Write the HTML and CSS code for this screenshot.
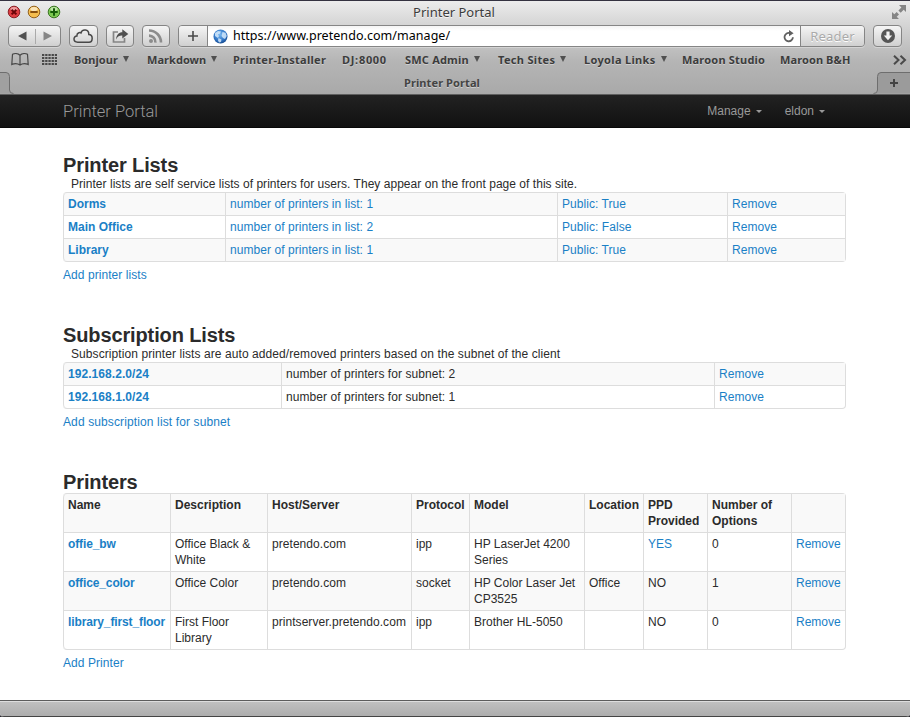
FILE: index.html
```html
<!DOCTYPE html>
<html lang="en">
<head>
<meta charset="utf-8">
<title>Printer Portal</title>
<link rel="stylesheet" href="styles.css">
</head>
<body>
<div class="window">
  <header class="chrome">
    <div class="titlebar">
      <div class="lights">
        <svg width="14" height="14" viewBox="0 0 14 14"><circle cx="7" cy="7" r="5.800" fill="#dc3c40" stroke="#8c2026"/><ellipse cx="7" cy="4" rx="3.600" ry="2" fill="#fff" opacity=".5"/><path d="M4.600 4.800l4.800 4.600M9.400 4.800L4.600 9.400" stroke="#6a0508" stroke-width="2"/></svg>
        <svg width="14" height="14" viewBox="0 0 14 14"><circle cx="7" cy="7" r="5.800" fill="#f4bd4e" stroke="#95621c"/><ellipse cx="7" cy="4" rx="3.600" ry="2" fill="#fff" opacity=".6"/><path d="M3.300 7h7.400" stroke="#7a4206" stroke-width="1.800"/></svg>
        <svg width="14" height="14" viewBox="0 0 14 14"><circle cx="7" cy="7" r="5.800" fill="#7cc950" stroke="#3c7624"/><ellipse cx="7" cy="4" rx="3.600" ry="2" fill="#fff" opacity=".5"/><path d="M3.300 7h7.400M7 3.300v7.400" stroke="#155c08" stroke-width="2"/></svg>
      </div>
      <div class="title"><span>Printer Portal</span></div>
      <svg class="expand" width="16" height="16" viewBox="0 0 16 16" fill="#858585"><path d="M8 1h7v7l-2.300-2.300-3 3-2.300-2.300 3-3z"/><path d="M1 8v7h7l-2.300-2.300 2.300-2.300-2.300-2.300-2.400 2.200z"/></svg>
    </div>
    <div class="toolbar">
      <div class="btn history">
        <svg width="52" height="20" viewBox="0 0 52 20"><path d="M17.500 5.500v9L9 10z" fill="#505050"/><path d="M34.500 5.500v9L43 10z" fill="#858585"/><path d="M26.500 3v15" stroke="#aaa"/></svg>
      </div>
      <div class="btn cloud">
        <svg width="20" height="16" viewBox="0 0 20 16"><path d="M4.700 14.200C-.3 14.200.1 8 3.900 7.900 3.800 4.900 6.700 4.100 7.900 5 9.100.700 16 .9 15.800 6.500 20.500 6.700 20 14.200 16 14.200z" fill="none" stroke="#484848" stroke-width="1.500"/></svg>
      </div>
      <div class="btn share">
        <svg width="18" height="16" viewBox="0 0 18 16"><path d="M7 4H2.500v10h11v-4" fill="none" stroke="#858585" stroke-width="1.700"/><path d="M5 11.500C5.500 6.500 8 4.300 11.300 4.300V1.300L17.300 6l-6 4.400V7.500C8.500 7.400 6.800 8.300 5 11.500z" fill="#505050"/></svg>
      </div>
      <div class="btn rss">
        <svg width="16" height="16" viewBox="0 0 16 16"><circle cx="3" cy="13" r="2" fill="#8c8c8c"/><path d="M1 7.600a6.400 6.400 0 0 1 6.400 7M1 2.500a12 12 0 0 1 12 12" fill="none" stroke="#8c8c8c" stroke-width="2.600"/></svg>
      </div>
      <div class="address">
        <div class="add"><svg width="12" height="12" viewBox="0 0 12 12"><path d="M1 6h10M6 1v10" stroke="#4a4a4a" stroke-width="1.600"/></svg></div>
        <div class="url">
          <svg width="15" height="15" viewBox="0 0 15 15"><defs><radialGradient id="globe" cx=".45" cy=".35" r=".65"><stop offset="0" stop-color="#79b9f2"/><stop offset=".7" stop-color="#2e73c4"/><stop offset="1" stop-color="#174b8f"/></radialGradient></defs><circle cx="7.500" cy="7.500" r="7" fill="url(#globe)"/><path d="M2 4l3-2 3 .5-1 2-2 1 1 1.500-1 2-3-2zM9.500 3l3 .8 1.300 3.200-1.800 3-2-1-1.500-2 .5-2zM5.500 9l3 1.500-.5 2.500-2 .5-1-2z" fill="#d3e9fb" opacity=".85"/></svg>
          <span class="href">https://www.pretendo.com/manage/</span>
          <svg class="reload" width="12" height="13" viewBox="0 0 12 13"><path d="M9.900 7.200A4.200 4.200 0 1 1 7 3.100" fill="none" stroke="#606060" stroke-width="1.800"/><path d="M6 0l4.600 3.300L6 6.300z" fill="#606060"/></svg>
        </div>
        <div class="reader"><span>Reader</span></div>
      </div>
      <div class="btn download">
        <svg width="16" height="16" viewBox="0 0 16 16"><circle cx="8" cy="8" r="7" fill="#555"/><path d="M6.400 3.600h3.200v4h2.600L8 12.200 3.800 7.600h2.600z" fill="#f2f2f2"/></svg>
      </div>
    </div>
    <nav class="bookmarks">
      <svg width="18" height="13" viewBox="0 0 18 13"><path d="M9 2.200C7 .4 3.500.3 1.500 1.300L.8 11.500C3.500 10.300 7 10.600 9 12c2-1.400 5.500-1.700 8.200-.5L16.500 1.300C14.500.3 11 .4 9 2.200zM9 2.200V12" fill="none" stroke="#484848" stroke-width="1.200"/></svg>
      <svg width="17" height="12" viewBox="0 0 17 12"><path d="M1 1h15M1 4h15M1 7h15M1 10h15" stroke="#484848" stroke-width="2" stroke-dasharray="2.300 .9"/></svg>
      <div class="bm bonjour"><span>Bonjour</span><i></i></div>
      <div class="bm markdown"><span>Markdown</span><i></i></div>
      <div class="bm installer"><span>Printer-Installer</span></div>
      <div class="bm dj"><span>DJ:8000</span></div>
      <div class="bm smc"><span>SMC Admin</span><i></i></div>
      <div class="bm tech"><span>Tech Sites</span><i></i></div>
      <div class="bm loyola"><span>Loyola Links</span><i></i></div>
      <div class="bm studio"><span>Maroon Studio</span></div>
      <div class="bm bh"><span>Maroon B&amp;H</span></div>
      <svg width="14" height="10" viewBox="0 0 14 10"><path d="M1 .8L5.500 5 1 9.200M7.500.8L12 5 7.500 9.200" fill="none" stroke="#4a4a4a" stroke-width="2"/></svg>
    </nav>
    <div class="tabs">
      <svg width="14" height="22" viewBox="0 0 14 22"><path d="M0 .5h6q3.500 0 3.500 4V18q0 3.500 4 3.500H0z" fill="#a0a0a0"/><path d="M0 .5h6q3.500 0 3.500 4V18q0 3.500 4 3.500" fill="none" stroke="#6e6e6e"/></svg>
      <div class="tab"><span>Printer Portal</span></div>
      <div class="tab-new">
        <svg width="37" height="22" viewBox="0 0 37 22"><path d="M37 .5H8q-3.500 0-3.500 4V18q0 3.500-4 3.500H37z" fill="#9b9b9b"/><path d="M37 .5H8q-3.500 0-3.500 4V18q0 3.500-4 3.500" fill="none" stroke="#6e6e6e"/><path d="M17 11h8M21 7v8" stroke="#444" stroke-width="2"/></svg>
      </div>
    </div>
  </header>

  <div class="navbar">
    <a class="brand">Printer Portal</a>
    <div class="menu"><a class="manage"><span>Manage</span><i></i></a><a><span>eldon</span><i></i></a></div>
  </div>

  <main>
    <section>
      <h3>Printer Lists</h3>
      <p>Printer lists are self service lists of printers for users. They appear on the front page of this site.</p>
      <table class="lists">
        <colgroup><col class="w162"><col class="w332"><col class="w170"><col></colgroup>
        <tr><th><a>Dorms</a></th><td><a>number of printers in list: 1</a></td><td><a>Public: True</a></td><td><a>Remove</a></td></tr>
        <tr><th><a>Main Office</a></th><td><a>number of printers in list: 2</a></td><td><a>Public: False</a></td><td><a>Remove</a></td></tr>
        <tr><th><a>Library</a></th><td><a>number of printers in list: 1</a></td><td><a>Public: True</a></td><td><a>Remove</a></td></tr>
      </table>
      <div class="more"><a>Add printer lists</a></div>
    </section>
    <section>
      <h3>Subscription Lists</h3>
      <p class="p-subs">Subscription printer lists are auto added/removed printers based on the subnet of the client</p>
      <table class="subnets">
        <colgroup><col class="w218"><col class="w433"><col></colgroup>
        <tr><th><a>192.168.2.0/24</a></th><td>number of printers for subnet: 2</td><td><a>Remove</a></td></tr>
        <tr><th><a>192.168.1.0/24</a></th><td>number of printers for subnet: 1</td><td><a>Remove</a></td></tr>
      </table>
      <div class="more more-subs"><a>Add subscription list for subnet</a></div>
    </section>
    <section>
      <h3>Printers</h3>
      <table class="printers">
        <colgroup><col class="w107"><col class="w97"><col class="w144"><col class="w58"><col class="w115"><col class="w59"><col class="w64"><col class="w84"><col></colgroup>
        <tr><th>Name</th><th>Description</th><th>Host/Server</th><th>Protocol</th><th>Model</th><th>Location</th><th>PPD<br>Provided</th><th>Number of<br>Options</th><th></th></tr>
        <tr><th><a>offie_bw</a></th><td>Office Black &amp;<br>White</td><td>pretendo.com</td><td>ipp</td><td>HP LaserJet 4200<br>Series</td><td></td><td><a>YES</a></td><td>0</td><td><a>Remove</a></td></tr>
        <tr><th><a>office_color</a></th><td>Office Color</td><td>pretendo.com</td><td>socket</td><td>HP Color Laser Jet<br>CP3525</td><td>Office</td><td>NO</td><td>1</td><td><a>Remove</a></td></tr>
        <tr><th><a>library_first_floor</a></th><td>First Floor<br>Library</td><td>printserver.pretendo.com</td><td>ipp</td><td>Brother HL-5050</td><td></td><td>NO</td><td>0</td><td><a>Remove</a></td></tr>
      </table>
      <div class="more"><a>Add Printer</a></div>
    </section>
  </main>
  <footer></footer>
</div>
</body>
</html>
```
FILE: styles.css
```css
* { box-sizing: border-box; }
html, body { margin: 0; height: 717px; overflow: hidden; background: #2a2830; }
body { font: 12px/16px "Liberation Sans", Arial, sans-serif; color: #2b2b2b; }
svg { display: block; flex: none; }
.window { height: 717px; display: flex; flex-direction: column; background: #fff; border-radius: 0 0 4px 4px; overflow: hidden; }

.chrome {
  height: 95px; flex: none;
  border-top: 1px solid #343240;
  border-bottom: 1px solid #5f5f5f;
  background: linear-gradient(#ececec 0, #dadada 18px, #c6c6c6 40px, #b5b5b5 60px, #a9a9a9 93px);
  font-family: "Noto Sans", "Open Sans", sans-serif;
}
.titlebar { height: 24px; display: grid; grid-template-columns: 60px 1fr 60px; padding-left: 7px; }
.lights { display: flex; gap: 6px; padding-top: 4px; }
.title { text-align: center; font-size: 13px; line-height: 23px; color: #3c3c3c; text-shadow: 0 1px #f4f4f4; padding-right: 9px; }
.expand { justify-self: end; margin: 3px 3px 0 0; }

.toolbar { display: flex; height: 22px; padding: 0 8px; }
.btn, .address { border: 1px solid #858585; border-radius: 4px; box-shadow: 0 1px #d4d4d4; }
.btn, .add, .reader { background: linear-gradient(#f5f5f5, #d0d0d0); display: flex; align-items: center; justify-content: center; }
.history { width: 53px; }
.cloud { width: 29px; margin-left: 8px; }
.share { width: 28px; margin-left: 8px; }
.rss { width: 28px; margin-left: 8px; }
.address { width: 688px; margin-left: 8px; display: flex; overflow: hidden; }
.add { width: 29px; border-right: 1px solid #858585; }
.url { flex: 1; display: flex; align-items: center; background: linear-gradient(#f4f4f4, #fff 5px); padding: 0 5px 0 5px; }
.href { margin-left: 5px; font-size: 12.500px; line-height: 20px; letter-spacing: .05px; color: #000; flex: 1; }
.reader { width: 64px; border-left: 1px solid #858585; font-size: 13px; color: #aaa; letter-spacing: .2px; text-shadow: 0 1px #fff; }
.download { width: 29px; margin-left: 8px; }

.bookmarks {
  height: 25px; display: grid; align-items: center; padding-left: 11px;
  grid-template-columns: 30px 33px 73px 86px 109px 63px 93px 86px 98px 98px 113px 14px;
  font-size: 11px; font-weight: 700; color: #3c3c3c; text-shadow: 0 1px #cfcfcf;
}
.bm { display: flex; align-items: center; gap: 5px; white-space: nowrap; }
.bm i { border: 3.500px solid transparent; border-top: 6px solid #505050; border-bottom: 0; margin-top: -1px; }
.bm span { letter-spacing: .2px; }
.bonjour span, .markdown span { letter-spacing: .05px; }
.installer span { letter-spacing: .28px; }
.dj span { letter-spacing: .7px; }
.bh span { letter-spacing: .1px; }
.tech span, .loyola span { letter-spacing: .33px; }
.tabs { height: 22px; display: flex; font-size: 11px; font-weight: 700; color: #444; text-shadow: 0 1px #cfcfcf; }
.tab { flex: 1; text-align: center; line-height: 21px; padding-right: 3px; letter-spacing: .1px; }
.tab-new { width: 37px; }

.navbar { height: 33px; flex: none; padding: 0 85px 0 63px; display: flex; justify-content: space-between; align-items: center; background: linear-gradient(#222, #111); border-bottom: 1px solid #080808; color: #999; }
.brand { font-family: Roboto, sans-serif; font-size: 16.500px; line-height: 18px; font-weight: 300; letter-spacing: 0; color: #999; padding-top: 1px; }
.menu { display: flex; gap: 23px; }
.menu a { display: flex; align-items: center; gap: 5px; }
.menu i { border: 3px solid transparent; border-top-color: #999; border-bottom: 0; }

main { flex: 1; min-height: 0; overflow: hidden; padding: 27px 64px 0 63px; }
section { margin-bottom: 39px; }
h3 { margin: 0; font-size: 20px; line-height: 21px; font-weight: 700; letter-spacing: -.12px; color: #2b2b2b; }
p { margin: 0; padding-left: 8px; white-space: nowrap; letter-spacing: .034px; }
.p-subs { letter-spacing: .083px; }
main a { color: #1a80c6; }
table { table-layout: fixed; width: 783px; border-spacing: 0; border: 1px solid #ddd; border-left: 0; border-radius: 4px; }
th, td { padding: 3px 0 3px 4px; text-align: left; vertical-align: top; white-space: nowrap; border-left: 1px solid #ddd; border-top: 1px solid #ddd; height: 23px; }
.lists td, .subnets td, .subnets th { letter-spacing: .06px; }
.printers td:nth-child(3) { letter-spacing: .05px; }
.printers th a { letter-spacing: -.12px; }
tr:first-child > * { border-top: 0; height: 22px; }
tr:nth-child(odd) > * { background: #f9f9f9; }
tr:first-child > :first-child { border-top-left-radius: 4px; }
tr:last-child > :first-child { border-bottom-left-radius: 4px; }
.more { height: 24px; padding-top: 5px; letter-spacing: .06px; }
.more-subs { letter-spacing: .12px; }
.w162 { width: 162px; } .w332 { width: 332px; } .w170 { width: 170px; }
.w218 { width: 218px; } .w433 { width: 433px; }
.w107 { width: 107px; } .w97 { width: 97px; } .w144 { width: 144px; } .w58 { width: 58px; }
.w115 { width: 115px; } .w59 { width: 59px; } .w64 { width: 64px; } .w84 { width: 84px; }

footer { height: 17px; flex: none; border-top: 1px solid #5d5d5d; border-bottom: 1px solid #444; background: linear-gradient(#dedede 1px, #c0c0c0 1px, #adadad); }
```
